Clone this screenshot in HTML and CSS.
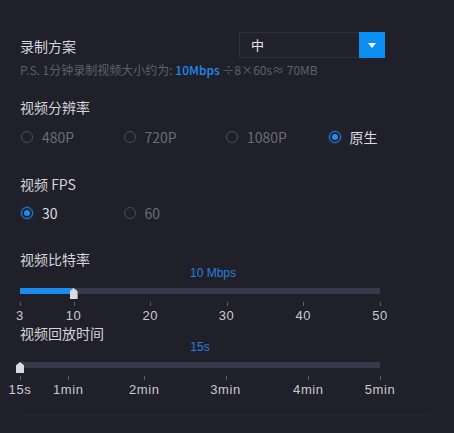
FILE: index.html
```html
<!DOCTYPE html>
<html lang="zh">
<head>
<meta charset="utf-8">
<link rel="stylesheet" href="styles.css">
</head>
<body>
<div class="panel">
  <div class="head-row">
    <div class="label label-top">录制方案</div>
    <div class="select">
      <span class="select-value">中</span>
      <span class="select-btn"><span class="caret"></span></span>
    </div>
  </div>
  <div class="note">P.S. 1分钟录制视频大小约为: <span class="note-hl">10Mbps</span> ÷8×60s≈ 70MB</div>

  <div class="label sec-res">视频分辨率</div>
  <div class="radios r-res">
    <label class="radio"><span class="dot"></span><span class="rtext">480P</span></label>
    <label class="radio"><span class="dot"></span><span class="rtext">720P</span></label>
    <label class="radio"><span class="dot"></span><span class="rtext">1080P</span></label>
    <label class="radio on"><span class="dot"></span><span class="rtext">原生</span></label>
  </div>

  <div class="label sec-fps">视频 FPS</div>
  <div class="radios r-fps">
    <label class="radio on"><span class="dot"></span><span class="rtext">30</span></label>
    <label class="radio"><span class="dot"></span><span class="rtext">60</span></label>
  </div>

  <div class="label sec-slider1">视频比特率</div>
  <div class="slider">
    <div class="val val-shift">10 Mbps</div>
    <div class="rail">
      <div class="track"><div class="fill" style="width:14.9%"></div></div>
      <span class="thumb" style="left:14.9%"></span>
    </div>
    <div class="scale">
      <span class="mark" style="left:0%"><i></i><b>3</b></span>
      <span class="mark" style="left:14.9%"><i></i><b>10</b></span>
      <span class="mark" style="left:36.2%"><i></i><b>20</b></span>
      <span class="mark" style="left:57.4%"><i></i><b>30</b></span>
      <span class="mark" style="left:78.7%"><i></i><b>40</b></span>
      <span class="mark" style="left:100%"><i></i><b>50</b></span>
    </div>
  </div>

  <div class="label sec-slider2">视频回放时间</div>
  <div class="slider">
    <div class="val">15s</div>
    <div class="rail">
      <div class="track"><div class="fill" style="width:0%"></div></div>
      <span class="thumb" style="left:0%"></span>
    </div>
    <div class="scale">
      <span class="mark" style="left:0%"><i></i><b>15s</b></span>
      <span class="mark" style="left:13.4%"><i></i><b>1min</b></span>
      <span class="mark" style="left:34.5%"><i></i><b>2min</b></span>
      <span class="mark" style="left:57.1%"><i></i><b>3min</b></span>
      <span class="mark" style="left:80.1%"><i></i><b>4min</b></span>
      <span class="mark" style="left:100%"><i></i><b>5min</b></span>
    </div>
  </div>

  <div class="sep"></div>
</div>
</body>
</html>
```
FILE: styles.css
```css
* { box-sizing: border-box; }
html, body { margin: 0; padding: 0; }
body {
  background: #1f2029;
  width: 454px;
  height: 433px;
  overflow: hidden;
  font-family: "Noto Sans CJK SC", "Noto Sans", sans-serif;
  color: #d3d5db;
}
.panel {
  padding: 32px 0 0 20px;
}
.head-row {
  display: flex;
  align-items: flex-start;
  justify-content: space-between;
  width: 365px;
  height: 26px;
}
.label {
  font-size: 14px;
  line-height: 20px;
  color: #d3d5db;
}
.label-top { margin-top: 4px; }
.select {
  width: 146px;
  height: 26px;
  display: flex;
  background: #21222b;
  border: 1px solid #2d2f3a;
  border-right: none;
}
.select-value {
  flex: 1;
  font-size: 13px;
  line-height: 24px;
  padding-left: 11px;
  color: #e8e9ec;
}
.select-btn {
  width: 26px;
  height: 26px;
  margin-top: -1px;
  background: #0b8ff2;
  display: flex;
  align-items: center;
  justify-content: center;
}
.caret {
  width: 0; height: 0;
  border-left: 4px solid transparent;
  border-right: 4px solid transparent;
  border-top: 5px solid #ffffff;
}
.note {
  margin-top: 4px;
  font-size: 12px;
  line-height: 16px;
  color: #5d606c;
}
.note-hl { color: #1e8cf0; font-weight: 500; }

.sec-res { margin-top: 19px; }
.sec-fps { margin-top: 27px; }
.sec-slider1 { margin-top: 27px; line-height: 18px; }
.sec-slider2 { margin-top: 1px; line-height: 18px; }

.radios {
  display: grid;
  grid-template-columns: 102.5px 102.5px 102.5px 102.5px;
  height: 20px;
}
.r-res { margin-top: 10px; }
.r-fps { margin-top: 9px; }
.radio {
  display: flex;
  align-items: center;
  gap: 9px;
  color: #6a6d79;
  font-size: 14px;
  line-height: 20px;
}
.radio.on { color: #dcdee3; }
.dot {
  width: 12px;
  height: 12px;
  margin-left: 1px;
  border-radius: 50%;
  border: 1px solid #4b4e5b;
  display: flex;
  align-items: center;
  justify-content: center;
}
.radio.on .dot {
  border-color: #1e8cf0;
  box-shadow: 0 0 3px rgba(30, 140, 240, 0.45);
}
.radio.on .dot::after {
  content: "";
  width: 6px;
  height: 6px;
  border-radius: 50%;
  background: #1e8cf0;
}
.rtext { font-family: "Noto Sans", "Noto Sans CJK SC", sans-serif; }
.radio.on .rtext, .radio .rtext { font-family: "Noto Sans CJK SC", "Noto Sans", sans-serif; }

.slider { width: 360px; }
.val {
  margin-top: -1px;
  font-family: "Liberation Sans", Arial, sans-serif;
  font-size: 12px;
  line-height: 12px;
  color: #2a7fdc;
  text-align: center;
}
.val-shift { padding-left: 26px; }
.rail {
  position: relative;
  margin-top: 9px;
  height: 12px;
}
.track {
  margin-top: 4px;
  height: 6px;
  background: #363a4b;
}
.fill {
  height: 100%;
  background: #1a8bef;
}
.thumb {
  position: absolute;
  top: 0;
  width: 8px;
  height: 11px;
  margin-left: -4px;
  background: #d9dbe0;
  clip-path: polygon(50% 0, 100% 30%, 100% 100%, 0 100%, 0 30%);
}
.scale {
  position: relative;
  height: 23px;
}
.mark {
  position: absolute;
  top: 0;
  width: 0;
}
.mark i {
  position: absolute;
  left: 0;
  top: 2px;
  width: 1px;
  height: 4px;
  background: #5e616c;
}
.mark b {
  position: absolute;
  top: 9px;
  left: 0;
  transform: translateX(-50%);
  font-weight: normal;
  font-family: "Liberation Sans", Arial, sans-serif;
  font-size: 13px;
  line-height: 14px;
  letter-spacing: 0.6px;
  color: #c9cbd1;
  white-space: nowrap;
}
.sep {
  margin-top: 17px;
  width: 410px;
  height: 1px;
  background: #272833;
}
```
